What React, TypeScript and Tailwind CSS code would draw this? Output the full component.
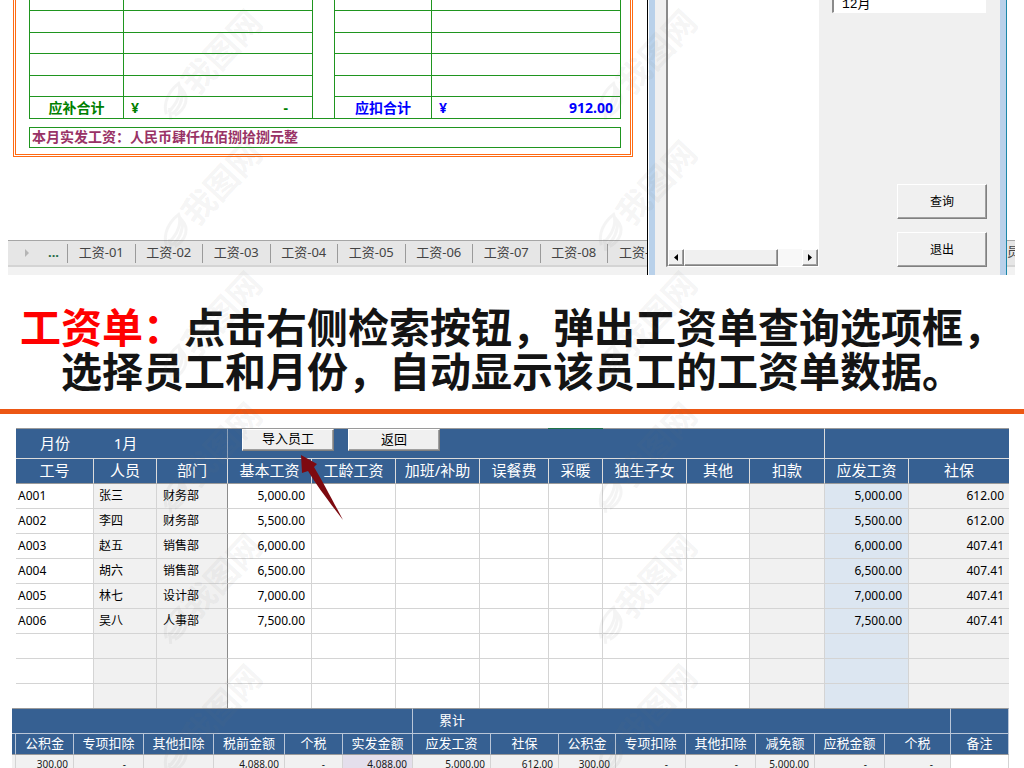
import clsx from 'clsx';

type SalaryRow = {
  id: string;
  name: string;
  dept: string;
  base: string;
  gross: string;
  social: string;
};

const SHEET_TABS = ['01', '02', '03', '04', '05', '06', '07', '08'];

const SALARY_COLUMNS = [
  { label: '工号', width: 'w-[78px]' },
  { label: '人员', width: 'w-[63px]' },
  { label: '部门', width: 'w-[71px]' },
  { label: '基本工资', width: 'w-[84px]' },
  { label: '工龄工资', width: 'w-[84px]' },
  { label: '加班/补助', width: 'w-[84px]' },
  { label: '误餐费', width: 'w-[69px]' },
  { label: '采暖', width: 'w-[54px]' },
  { label: '独生子女', width: 'w-[84px]' },
  { label: '其他', width: 'w-[63px]' },
  { label: '扣款', width: 'w-[75px]' },
  { label: '应发工资', width: 'w-[84px]' },
  { label: '社保', width: 'w-[100px]' },
];

const SALARY_ROWS: SalaryRow[] = [
  { id: 'A001', name: '张三', dept: '财务部', base: '5,000.00', gross: '5,000.00', social: '612.00' },
  { id: 'A002', name: '李四', dept: '财务部', base: '5,500.00', gross: '5,500.00', social: '612.00' },
  { id: 'A003', name: '赵五', dept: '销售部', base: '6,000.00', gross: '6,000.00', social: '407.41' },
  { id: 'A004', name: '胡六', dept: '销售部', base: '6,500.00', gross: '6,500.00', social: '407.41' },
  { id: 'A005', name: '林七', dept: '设计部', base: '7,000.00', gross: '7,000.00', social: '407.41' },
  { id: 'A006', name: '吴八', dept: '人事部', base: '7,500.00', gross: '7,500.00', social: '407.41' },
  { id: '', name: '', dept: '', base: '', gross: '', social: '' },
  { id: '', name: '', dept: '', base: '', gross: '', social: '' },
  { id: '', name: '', dept: '', base: '', gross: '', social: '' },
];

const TOTAL_COLUMNS = [
  { label: '', value: '', width: 'w-[4px]' },
  { label: '公积金', value: '300.00', width: 'w-[58px]' },
  { label: '专项扣除', value: '-', width: 'w-[70px]' },
  { label: '其他扣除', value: '', width: 'w-[70px]' },
  { label: '税前金额', value: '4,088.00', width: 'w-[71px]' },
  { label: '个税', value: '-', width: 'w-[58px]' },
  { label: '实发金额', value: '4,088.00', width: 'w-[70px]' },
  { label: '应发工资', value: '5,000.00', width: 'w-[78px]' },
  { label: '社保', value: '612.00', width: 'w-[68px]' },
  { label: '公积金', value: '300.00', width: 'w-[57px]' },
  { label: '专项扣除', value: '-', width: 'w-[70px]' },
  { label: '其他扣除', value: '-', width: 'w-[70px]' },
  { label: '减免额', value: '5,000.00', width: 'w-[59px]' },
  { label: '应税金额', value: '-', width: 'w-[70px]' },
  { label: '个税', value: '-', width: 'w-[66px]' },
  { label: '备注', value: '', width: 'w-[58px]' },
];

const RAISED =
  'border border-t-white border-l-white border-r-[#808080] border-b-[#808080] bg-[#f0f0f0] shadow-[inset_-1px_-1px_0_#a0a0a0]';

/* 工资条 */
function Voucher() {
  const line = 'border-[#1f951f]';
  const cell = clsx('border-r border-b', line);

  return (
    <div className="mr-[14px] ml-[5px] border-x-3 border-b-3 border-double border-[#ff6a13] pr-[9px] pb-[6px] pl-[13px] font-bold">
      <table className={clsx('w-full table-fixed border-separate border-spacing-0 border-l text-[14px] leading-[20px]', line)}>
        <colgroup>
          <col className="w-[94px]" />
          <col className="w-[189px]" />
          <col className="w-[22px]" />
          <col className="w-[97px]" />
          <col className="w-[189px]" />
        </colgroup>
        <tbody>
          {['h-[11px]', 'h-[22px]', 'h-[21px]', 'h-[22px]', 'h-[21px]'].map((height, i) => (
            <tr key={i} className={height}>
              <td className={cell} />
              <td className={cell} />
              <td className={clsx('border-r', line)} />
              <td className={cell} />
              <td className={cell} />
            </tr>
          ))}
          <tr className="h-[22px]">
            <td className={clsx(cell, 'p-0 text-center text-[#008000]')}>应补合计</td>
            <td className={clsx(cell, 'p-0 text-[#008000]')}>
              <div className="flex justify-between pr-6 pl-[7px]">
                <span>¥</span>
                <span>-</span>
              </div>
            </td>
            <td className={cell} />
            <td className={clsx(cell, 'p-0 text-center text-[#0000ff]')}>应扣合计</td>
            <td className={clsx(cell, 'p-0 text-[#0000ff]')}>
              <div className="flex justify-between px-[7px]">
                <span>¥</span>
                <span>912.00</span>
              </div>
            </td>
          </tr>
        </tbody>
      </table>
      <p className={clsx('mt-2 h-[21px] border pl-[2px] text-[14px] leading-[18px] text-[#993366]', line)}>
        本月实发工资：人民币肆仟伍佰捌拾捌元整
      </p>
    </div>
  );
}

/* 工作表标签 */
function SheetTabs() {
  return (
    <nav className="h-[35px] overflow-hidden bg-[#f2f2f2]">
      <div className="flex h-[27px] items-center border-t border-b-2 border-t-[#a6a6a6] border-b-[#d4d4d4] bg-[#e6e6e6] text-[13px] text-[#444444]">
        <div className="flex w-[59px] shrink-0 items-center justify-between pr-2 pl-[17px]">
          <svg className="h-2 w-1" viewBox="0 0 4 8" fill="#b5b5b5">
            <path d="M0 0 4 4 0 8Z" />
          </svg>
          <span className="font-bold text-[#1f6b45]">...</span>
        </div>
        <div className="grid flex-1 grid-cols-8">
          {SHEET_TABS.map((no) => (
            <button key={no} className="h-[19px] border-l border-[#9a9a9a] pb-[3px] leading-[16px]">
              工资-{no}
            </button>
          ))}
        </div>
        <button className="h-[19px] w-10 shrink-0 overflow-hidden border-l border-[#9a9a9a] pb-[3px] pl-[11px] text-left leading-[16px] whitespace-nowrap">
          工资-09
        </button>
      </div>
    </nav>
  );
}

/* 查询窗口 */
function QueryDialog() {
  return (
    <section className="flex w-[360px] shrink-0 border-r border-l border-r-[#1c1c1c] border-l-black bg-white pl-px font-['Liberation_Sans','Noto_Sans_CJK_SC',sans-serif] text-[12px] text-black">
      <div className="flex flex-1 justify-between border-r-6 border-l-6 border-[#b9d1ea] bg-[#f0f0f0] pb-2 shadow-[1px_0_0_#1b87a8]">
        <div className="ml-[11px] flex w-[153px] flex-col border-r border-b border-l-2 border-r-white border-b-white border-l-[#8a8a8a] bg-white">
          <ul role="listbox" aria-label="员工" className="flex-1" />
          <div className="flex h-[17px] bg-[#f8f8f8]">
            <button aria-label="向左" className={clsx('flex w-4 items-center justify-center', RAISED)}>
              <svg className="h-[7px] w-1" viewBox="0 0 4 7">
                <path d="M4 0 0 3.500 4 7Z" />
              </svg>
            </button>
            <div className={clsx('w-[94px]', RAISED)} />
            <button aria-label="向右" className={clsx('ml-auto flex w-4 items-center justify-center', RAISED)}>
              <svg className="h-[7px] w-1" viewBox="0 0 4 7">
                <path d="M0 0 4 3.500 0 7Z" />
              </svg>
            </button>
          </div>
        </div>
        <div className="mr-[13px] flex w-[155px] flex-col">
          <ul
            role="listbox"
            aria-label="月份"
            className="mr-px flex h-[13px] items-end overflow-hidden border-r border-b border-l-2 border-r-white border-b-white border-l-[#8a8a8a] bg-white pl-2 text-[13px] leading-[14px]"
          >
            <li role="option" aria-selected="false" className="font-['Liberation_Mono','Noto_Sans_CJK_SC',monospace]">
              12月
            </li>
          </ul>
          <div className="mt-auto flex flex-col items-end gap-[13px]">
            <button className={clsx('h-[35px] w-[90px]', RAISED)}>查询</button>
            <button className={clsx('h-[35px] w-[90px]', RAISED)}>退出</button>
          </div>
        </div>
      </div>
    </section>
  );
}

function SalaryTable() {
  const head = 'border-r border-b border-[#dcdcdc] font-normal last:border-r-0';
  const cell = 'border-r border-b border-[#d4d4d4] last:border-r-0';
  const top = 'border-t border-b border-[#dcdcdc] border-t-[#9a9a9a] p-0 font-normal';

  return (
    <section className="relative mr-[15px] ml-4 h-[280px] overflow-hidden">
      <table className="w-full table-fixed border-separate border-spacing-0 text-[12px] text-black">
        <colgroup>
          {SALARY_COLUMNS.map((col) => (
            <col key={col.label} className={col.width} />
          ))}
        </colgroup>
        <thead className="bg-[#366092] text-[15px] leading-[20px] text-white">
          <tr className="h-[31px]">
            <th className={clsx(top, 'pb-[2px]')}>月份</th>
            <th className={clsx(top, 'pb-[2px]')}>1月</th>
            <th className={clsx(top, 'border-r border-r-[#8ea3bd]')} />
            <th colSpan={8} className={clsx(top, 'border-r align-top')}>
              <div className="flex gap-[14px] pl-[14px] font-['Liberation_Sans','Noto_Sans_CJK_SC',sans-serif] text-[13px] text-black">
                <button className={clsx('h-[22px] w-[92px] pb-[2px] leading-[16px]', RAISED)}>导入员工</button>
                <button className={clsx('h-[22px] w-[92px] leading-[16px]', RAISED)}>返回</button>
              </div>
            </th>
            <th colSpan={2} className={top} />
          </tr>
          <tr className="h-[25px]">
            {SALARY_COLUMNS.map((col) => (
              <th key={col.label} scope="col" className={clsx(head, 'border-b-[#9a9a9a] p-0 pb-[2px] whitespace-nowrap')}>
                {col.label}
              </th>
            ))}
          </tr>
        </thead>
        <tbody>
          {SALARY_ROWS.map((row, i) => (
            <tr key={i} className="h-[25px]">
              <td className={clsx(cell, 'pl-[2px]')}>{row.id}</td>
              <td className={clsx(cell, 'bg-[#f1f1f1] pl-[5px]')}>{row.name}</td>
              <td className={clsx(cell, 'border-r-[#8c8c8c] bg-[#f1f1f1] pl-[6px]')}>{row.dept}</td>
              <td className={clsx(cell, 'pr-[6px] text-right')}>{row.base}</td>
              <td className={cell} />
              <td className={cell} />
              <td className={cell} />
              <td className={cell} />
              <td className={cell} />
              <td className={cell} />
              <td className={clsx(cell, 'bg-[#f1f1f1]')} />
              <td className={clsx(cell, 'bg-[#dce6f1] pr-[6px] text-right')}>{row.gross}</td>
              <td className={clsx(cell, 'bg-[#f1f1f1] pr-[5px] text-right')}>{row.social}</td>
            </tr>
          ))}
        </tbody>
      </table>
      {/* 选中列标记 */}
      <span className="absolute top-0 left-[532px] h-px w-[55px] bg-[#217346]" />
      {/* 指向“导入员工”的箭头 */}
      <svg className="absolute top-[26px] left-[284px] h-[68px] w-[45px]" viewBox="0 0 45 68" fill="#7d0a10">
        <path d="M1 1 17 10 14 13 C23 28 34 49 43 66 C30 49 17 32 8 17 L2 19Z" />
      </svg>
    </section>
  );
}

function TotalTable() {
  const head = 'border-r border-b border-[#b9c6d8] p-0 font-normal';

  return (
    <section className="mr-[15px] ml-3">
      <table className="w-full table-fixed border-separate border-spacing-0">
        <colgroup>
          {TOTAL_COLUMNS.map((col, i) => (
            <col key={i} className={col.width} />
          ))}
        </colgroup>
        <thead className="bg-[#366092] text-[13px] leading-[18px] text-white">
          <tr className="h-[26px]">
            <th colSpan={7} className={clsx(head, 'border-t border-t-[#9a9a9a]')} />
            <th className="border-t border-b border-[#b9c6d8] border-t-[#9a9a9a] p-0 pb-[2px] font-normal">累计</th>
            <th colSpan={7} className={clsx(head, 'border-t border-t-[#9a9a9a]')} />
            <th className={clsx(head, 'border-t border-t-[#9a9a9a]')} />
          </tr>
          <tr className="h-[21px]">
            {TOTAL_COLUMNS.map((col, i) => (
              <th key={i} scope="col" className={clsx(head, 'border-b-[#9a9a9a] pb-[2px] whitespace-nowrap')}>
                {col.label}
              </th>
            ))}
          </tr>
        </thead>
        <tbody className="text-[10px] leading-[18px] text-[#1a1a1a]">
          <tr>
            {TOTAL_COLUMNS.map((col, i) => (
              <td
                key={i}
                className={clsx(
                  'border-r border-[#d4d4d4] py-0 pl-0 text-right',
                  col.value === '-' ? 'pr-[17px]' : 'pr-[5px]',
                  i === 6 ? 'bg-[#e4dfec]' : i === 15 ? 'bg-white' : 'bg-[#f1f1f1]'
                )}
              >
                {col.value}
              </td>
            ))}
          </tr>
        </tbody>
      </table>
    </section>
  );
}

/* 水印 */
function Watermarks() {
  return (
    <div aria-hidden="true" className="pointer-events-none absolute -top-px -left-2 grid auto-rows-[131px] grid-cols-[435px_435px]">
      {Array.from({ length: 12 }, (_, i) => (
        <div key={i} className="flex items-center justify-center">
          <div className="flex -rotate-47 items-center text-[33px] leading-[36px] font-bold text-neutral-500/8">
            <svg className="h-7 w-9" viewBox="0 0 36 28" fill="none" stroke="currentColor" strokeWidth="3">
              <path d="M2 16C8 6 20 2 33 4 29 12 18 17 5 16M6 20C14 22 25 18 31 11 30 21 20 27 7 23M1 23 9 14" />
            </svg>
            <span className="whitespace-nowrap">我图网</span>
          </div>
        </div>
      ))}
    </div>
  );
}

export default function App() {
  return (
    <main className="relative h-screen overflow-hidden bg-white font-['Noto_Sans','Noto_Sans_CJK_SC',sans-serif]">
      <div className="mr-[9px] ml-2 flex h-[275px]">
        <div className="flex min-w-0 flex-1 flex-col justify-between">
          <Voucher />
          <SheetTabs />
        </div>
        <QueryDialog />
        <div className="flex w-2 shrink-0 flex-col justify-end overflow-hidden">
          <div className="h-[35px] bg-[#f2f2f2]">
            <div className="h-[27px] border-t border-b-2 border-t-[#a6a6a6] border-b-[#d4d4d4] bg-[#e6e6e6] text-[13px] leading-[21px] text-[#444444]">
              员
            </div>
          </div>
        </div>
      </div>

      <h1 className="pt-[28px] pb-[18px] text-center font-['Noto_Sans_CJK_SC',sans-serif] text-[41px] leading-[44px] font-bold whitespace-nowrap text-[#141414]">
        <span className="text-[#ff0000]">工资单：</span>点击右侧检索按钮，弹出工资单查询选项框，
        <br />
        选择员工和月份，自动显示该员工的工资单数据。
      </h1>
      <hr className="mb-[14px] h-[5px] border-0 bg-[#ec5714]" />

      <SalaryTable />
      <TotalTable />
      <Watermarks />
    </main>
  );
}
